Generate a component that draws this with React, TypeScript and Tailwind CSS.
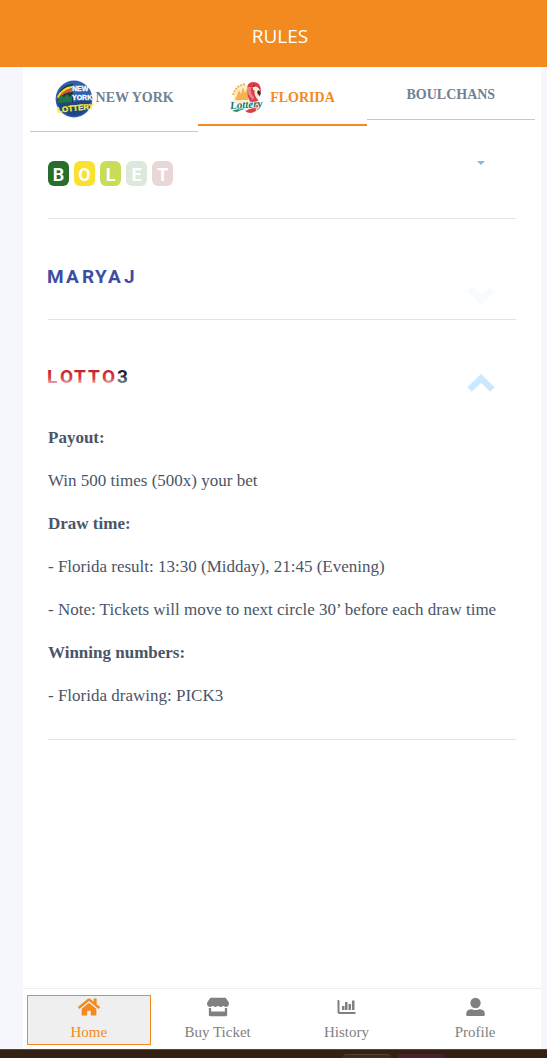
import React from "react";
import { FaHome, FaStore } from "react-icons/fa";

type IconProps = { className?: string };

function ChevronDown({ className }: IconProps) {
  return (
    <svg viewBox="0 0 28 18" className={className} fill="none" stroke="currentColor" strokeWidth="6.5" aria-hidden="true">
      <path d="M2.5 3L14 14L25.5 3" />
    </svg>
  );
}

function ChevronUp({ className }: IconProps) {
  return (
    <svg viewBox="0 0 28 18" className={className} fill="none" stroke="currentColor" strokeWidth="6.5" aria-hidden="true">
      <path d="M2.5 15.5L14 4.5L25.5 15.5" />
    </svg>
  );
}

function Caret({ className }: IconProps) {
  return (
    <svg viewBox="0 0 8 4" className={className} fill="currentColor" aria-hidden="true">
      <path d="M0 0H8L4 4Z" />
    </svg>
  );
}

function HistoryIcon({ className }: IconProps) {
  return (
    <svg viewBox="0 0 22 20" className={className} fill="currentColor" aria-hidden="true">
      <path d="M3.5 3H2.5V15Q2.5 17 4.5 17H20.5V15H5Q4.5 15 4.5 14.5V4Q4.5 3 3.5 3Z" />
      <path d="M7 9H9.5V13H7ZM10 5H12.5V13H10ZM13.5 7H16V13H13.5ZM17 3.5H19.5V13H17Z" />
    </svg>
  );
}

function ProfileIcon({ className }: IconProps) {
  return (
    <svg viewBox="0 0 22 20" className={className} fill="currentColor" aria-hidden="true">
      <circle cx="11.5" cy="6" r="5.2" />
      <path d="M7 12.2H8.2Q11.5 14 14.8 12.2H16Q20.8 12.5 20.8 17V18Q20.8 19 19.5 19H3.5Q2.2 19 2.2 18V17Q2.2 12.5 7 12.2Z" />
    </svg>
  );
}

function NewYorkLogo() {
  return (
    <svg viewBox="0 0 38 38" className="h-[38px] w-[38px] shrink-0" role="img" aria-label="New York Lottery">
      <defs>
        <clipPath id="ny-disc"><circle cx="19" cy="19" r="17" /></clipPath>
      </defs>
      <circle cx="19" cy="19" r="18.4" fill="#2f5fb3" />
      <g clipPath="url(#ny-disc)">
        <path d="M1 24Q3 5 18 4V24Z" fill="#183d3e" />
        <path d="M2 17Q7 7 17 6V8Q8 10 3 19Z" fill="#f8db2d" />
        <path d="M3 18Q8 10 17 8V12Q9 12 5 18Z" fill="#dd5632" />
        <path d="M2 22L6 15L9 17L12 14L15 17L17 15V23H2Z" fill="#237548" />
        <path d="M1 23L18 22L36 18V36H1Z" fill="#1f4680" />
      </g>
      <g fontFamily="Liberation Sans, sans-serif" fontWeight="700" strokeWidth="0.3" aria-hidden="true">
        <text x="17" y="11" fontSize="7" fill="#fff" stroke="#fff">NEW</text>
        <text x="17" y="19.5" fontSize="7" fill="#fff" stroke="#fff">YORK</text>
        <text x="2" y="31" fontSize="8" fill="#ffec2e" stroke="#ffec2e" transform="rotate(-6 19 28)">LOTTERY</text>
      </g>
    </svg>
  );
}

function FloridaLogo() {
  return (
    <svg viewBox="0 0 34 32" className="h-8 w-[34px] shrink-0" role="img" aria-label="Florida Lottery">
      <circle cx="16" cy="15" r="12" fill="#fdedc4" />
      <path d="M3 13Q6 3 16 2" fill="none" stroke="#efb343" strokeWidth="2" strokeDasharray="2 1" />
      <path d="M5 18L9 8L11 12L13 5L15 11L18 4L18 18Z" fill="#f4b34e" />
      <path d="M18 7Q16 1 23 0Q31 0 31 9L28 14Q28 8 25 7Q23 12 28 18Q31 24 26 29Q20 33 15 29Q22 27 22 22Q16 15 18 7Z" fill="#d83d4d" />
      <path d="M18 5Q16 12 23 18L24 15Q19 10 22 5Z" fill="#ed8288" />
      <path d="M23 5Q28 3 30 9L27 12Q27 8 23 8Z" fill="#fff1d8" />
      <path d="M28 8Q33 10 29 15Q30 12 27 11Z" fill="#292b2a" />
      <circle cx="24" cy="4" r="0.8" fill="#302e2b" />
      <path d="M2 29Q14 23 24 26Q14 26 7 30Z" fill="#2d8c71" />
      <text x="0" y="26" fontFamily="Liberation Serif, serif" fontWeight="700" fontStyle="italic" fontSize="11" fill="#14775f" stroke="#fff" strokeWidth="1.5" paintOrder="stroke" transform="rotate(-4 17 22)" aria-hidden="true">Lottery</text>
    </svg>
  );
}

function BoletLogo() {
  const tiles = [
    ["B", "bg-[#286d2b]"],
    ["O", "bg-[#fae02f]"],
    ["L", "bg-[#c8dc55]"],
    ["E", "bg-[#dce8da]"],
    ["T", "bg-[#e7d7d6]"],
  ];
  return (
    <span className="flex gap-[5px]">
      {tiles.map(([letter, color]) => (
        <span key={letter} className={`flex h-[25px] w-[21px] items-center justify-center rounded-md pt-[2px] font-['Roboto',sans-serif] text-[18px] leading-[22px] font-bold text-white ${color}`}>
          {letter}
        </span>
      ))}
    </span>
  );
}

function WordLogo({ word, xs, fill, lastFill }: { word: string; xs: number[]; fill: string; lastFill?: string }) {
  return (
    <svg viewBox="-2 -3 94 24" className="-my-[3px] -ml-[2px] h-6 w-[94px]" role="img" aria-label={word}>
      <defs>
        <linearGradient id="lotto-red" gradientUnits="userSpaceOnUse" x1="0" y1="2" x2="0" y2="17">
          <stop offset="0" stopColor="#c51f28" />
          <stop offset="0.55" stopColor="#d0454b" />
          <stop offset="1" stopColor="#f3c9ca" />
        </linearGradient>
        <linearGradient id="lotto-black" gradientUnits="userSpaceOnUse" x1="0" y1="2" x2="0" y2="17">
          <stop offset="0.3" stopColor="#202126" />
          <stop offset="1" stopColor="#8f9bb3" />
        </linearGradient>
      </defs>
      <g fontFamily="Roboto, sans-serif" fontWeight="700" fontSize="19">
        {word.split("").map((letter, i) => (
          <text key={i} x={xs[i]} y="15" fill={lastFill && i === word.length - 1 ? lastFill : fill}>{letter}</text>
        ))}
      </g>
    </svg>
  );
}

const navItems = [
  { label: "Home", Icon: FaHome },
  { label: "Buy Ticket", Icon: FaStore },
  { label: "History", Icon: HistoryIcon },
  { label: "Profile", Icon: ProfileIcon },
];

export default function App() {
  return (
    <div className="flex min-h-screen flex-col bg-[#f5f7fc] font-['Liberation_Serif',serif]">
      <header className="flex h-[67px] items-center justify-center bg-[#f28a20] pt-1 pl-[13px]">
        <h1 className="font-['Open_Sans',sans-serif] text-[19px] leading-6 text-white">RULES</h1>
      </header>

      <div className="mr-[6px] ml-[23px] flex grow flex-col bg-white">
        <div role="tablist" className="mr-[6px] ml-[7px] grid h-[65px] grid-cols-3 items-start text-[14px] leading-5 font-bold text-[#718096]">
          <button role="tab" aria-selected="false" className="flex h-[65px] items-center justify-center gap-[3px] border-b border-[#c8c8c8]">
            <NewYorkLogo />
            <span className="pb-[2px]">NEW YORK</span>
          </button>
          <button role="tab" aria-selected="true" className="flex h-[59px] items-center justify-center gap-[6px] border-b-2 border-[#f28a20] pt-1 text-[#f28a20]">
            <FloridaLogo />
            <span>FLORIDA</span>
          </button>
          <button role="tab" aria-selected="false" className="flex h-[53px] items-center justify-center border-b border-[#c8c8c8] pt-1">
            BOULCHANS
          </button>
        </div>

        <main className="grow px-[25px]">
          <section className="border-b border-[#e2e2e2]">
            <button aria-label="Bolet rules" aria-expanded="false" className="flex h-[86px] w-full items-start justify-between pt-[29px] pr-[31px]">
              <BoletLogo />
              <Caret className="h-1 w-2 text-[#73bcf5]" />
            </button>
          </section>
          <section className="border-b border-[#e2e2e2]">
            <button aria-label="Maryaj rules" aria-expanded="false" className="flex h-[100px] w-full items-start justify-between pt-[49px] pr-[21px]">
              <WordLogo word="MARYAJ" xs={[-1, 18, 34, 47, 60, 76]} fill="#3d4da3" />
              <ChevronDown className="mt-[18px] h-[18px] w-7 text-[#f7fbff]" />
            </button>
          </section>
          <section className="border-b border-[#e2e2e2] pb-[30px]">
            <button aria-label="Lotto3 rules" aria-expanded="true" className="flex h-[104px] w-full items-start justify-between pt-[48px] pr-[21px]">
              <WordLogo word="LOTTO3" xs={[-1, 12, 26, 40, 54, 69]} fill="url(#lotto-red)" lastFill="url(#lotto-black)" />
              <ChevronUp className="mt-[6px] h-[18px] w-7 text-[#cce8ff]" />
            </button>
            <div className="flex flex-col gap-4 text-[17px] leading-[27px] text-[#4a5568]">
              <p className="font-bold">Payout:</p>
              <p>Win 500 times (500x) your bet</p>
              <p className="font-bold">Draw time:</p>
              <p>- Florida result: 13:30 (Midday), 21:45 (Evening)</p>
              <p>- Note: Tickets will move to next circle 30’ before each draw time</p>
              <p className="font-bold">Winning numbers:</p>
              <p>- Florida drawing: PICK3</p>
            </div>
          </section>
        </main>

        <nav className="grid grid-cols-4 gap-[5px] border-t border-[#eeeeee] px-1 pt-[6px] pb-1">
          {navItems.map(({ label, Icon }, i) => (
            <a
              key={label}
              href="#"
              aria-current={i === 0 ? "page" : undefined}
              className={`flex h-[50px] flex-col items-center gap-[5px] border pt-[1px] text-[15px] leading-5 ${i === 0 ? "border-[#f28a20] bg-[#efefef] text-[#f28a20]" : "border-transparent text-[#808080]"}`}
            >
              <Icon className="h-5 w-[22px]" />
              <span>{label}</span>
            </a>
          ))}
        </nav>
      </div>

      <div className="grid h-[9px] grid-cols-[343fr_48fr_6fr_48fr_102fr] items-end overflow-hidden border-t border-[#4d4744] bg-[#352014]">
        <span className="col-start-2 h-1 rounded-t-md border-t border-[#55412f] bg-[#3f2b20]" />
        <span className="col-start-4 h-1 rounded-t-md bg-[#472429]" />
      </div>
    </div>
  );
}
